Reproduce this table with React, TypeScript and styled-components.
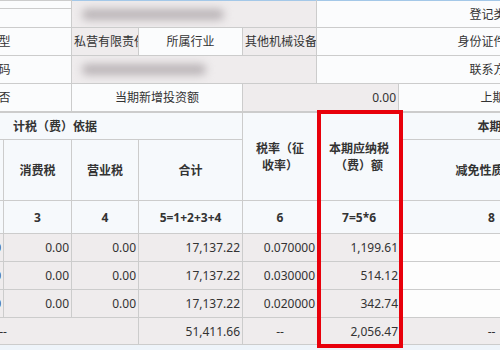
import React, { useLayoutEffect, useRef } from "react";
import styled, { createGlobalStyle, css } from "styled-components";

// the form is wider than the window; the screenshot shows it scrolled right
const SCROLL_LEFT = 233;

const GlobalStyle = createGlobalStyle`
  html, body {
    margin: 0;
    padding: 0;
    background: #eef4fa;
  }
  body {
    font-family: "Noto Sans", "Noto Sans CJK SC", sans-serif;
    font-size: 12px;
    color: #333333;
  }
`;

const Viewport = styled.div`
  width: 500px;
  height: 350px;
  overflow: hidden;
  background: #eef4fa;
`;

const Sheet = styled.div`
  position: relative;
  width: 903px;
`;

const Table = styled.table<{ $w: number }>`
  border-collapse: collapse;
  table-layout: fixed;
  width: ${({ $w }) => $w}px;
  border: none;
`;

const Col = styled.col<{ $w: number }>`
  width: ${({ $w }) => $w}px;
`;

const Row = styled.tr<{ $h: number }>`
  height: ${({ $h }) => $h}px;
`;

type Tone = "head" | "plain" | "field" | "blank";

const tones: Record<Tone, string> = {
  head: "#f6f9fc",
  plain: "#fbfcfd",
  field: "#efeced",
  blank: "#fdfdfd",
};

const Cell = styled.td<{
  $tone?: Tone;
  $align?: "left" | "center" | "right";
  $bold?: boolean;
  $wrap?: boolean;
  $topline?: boolean;
}>`
  border: 1px solid #cccccc;
  background: ${({ $tone = "plain" }) => tones[$tone]};
  text-align: ${({ $align = "center" }) => $align};
  font-weight: ${({ $bold }) => ($bold ? 700 : 400)};
  padding: ${({ $wrap }) => ($wrap ? "0 8px" : "0 2px")};
  white-space: ${({ $wrap }) => ($wrap ? "normal" : "nowrap")};
  overflow: hidden;
  line-height: 17px;
  vertical-align: middle;
  ${({ $topline }) =>
    $topline &&
    css`
      border-top: 1px solid #a4c8e8;
    `}
`;

// masked personal data: a smeared grey bar
const Smudge = styled.div<{ $w: number }>`
  width: ${({ $w }) => $w}px;
  height: 11px;
  margin-left: 8px;
  border-radius: 5px;
  background: #bab4b7;
  filter: blur(4px);
`;

const Highlight = styled.div`
  position: absolute;
  left: ${SCROLL_LEFT + 317}px;
  top: 110px;
  width: 86px;
  height: 238px;
  box-sizing: border-box;
  border: 4px solid #e8000b;
  pointer-events: none;
`;

const InfoTable = () => (
  <Table $w={903}>
    <colgroup>
      <Col $w={110} />
      <Col $w={194} />
      <Col $w={67} />
      <Col $w={104} />
      <Col $w={74} />
      <Col $w={82} />
      <Col $w={272} />
    </colgroup>
    <tbody>
      <Row $h={8}>
        <Cell rowSpan={6}>纳税人信息</Cell>
        <Cell />
        <Cell colSpan={3} rowSpan={2} $tone="field" $align="left" $topline>
          <Smudge $w={142} />
        </Cell>
        <Cell colSpan={2} rowSpan={2} $topline>
          登记类型
        </Cell>
      </Row>
      <Row $h={19}>
        <Cell />
      </Row>
      <Row $h={28}>
        <Cell>登记注册类型</Cell>
        <Cell $tone="field" $align="left">
          私营有限责任公司
        </Cell>
        <Cell>所属行业</Cell>
        <Cell $tone="field" $align="left">
          其他机械设备制造业
        </Cell>
        <Cell colSpan={2}>身份证件类型</Cell>
      </Row>
      <Row $h={28}>
        <Cell>社会信用代码</Cell>
        <Cell colSpan={3} $tone="field" $align="left">
          <Smudge $w={124} />
        </Cell>
        <Cell colSpan={2}>联系方式</Cell>
      </Row>
      <Row $h={28}>
        <Cell>适用：是／否</Cell>
        <Cell colSpan={2}>当期新增投资额</Cell>
        <Cell colSpan={2} $tone="field" $align="right">
          0.00
        </Cell>
        <Cell>上期留抵可抵免金额</Cell>
      </Row>
    </tbody>
  </Table>
);

interface TaxLine {
  name: string;
  vat: string;
  rate: string;
  due: string;
}

const lines: TaxLine[] = [
  { name: "城市维护建设税", vat: "17,137.22", rate: "0.070000", due: "1,199.61" },
  { name: "教育费附加", vat: "17,137.22", rate: "0.030000", due: "514.12" },
  { name: "地方教育附加", vat: "17,137.22", rate: "0.020000", due: "342.74" },
];

const TaxTable = () => (
  <Table $w={895}>
    <colgroup>
      <Col $w={100} />
      <Col $w={68} />
      <Col $w={68} />
      <Col $w={68} />
      <Col $w={67} />
      <Col $w={104} />
      <Col $w={75} />
      <Col $w={83} />
      <Col $w={182} />
      <Col $w={80} />
    </colgroup>
    <tbody>
      <Row $h={27}>
        <Cell rowSpan={3} $tone="head" $bold>
          税（费）种
        </Cell>
        <Cell colSpan={5} $tone="head" $bold>
          计税（费）依据
        </Cell>
        <Cell rowSpan={2} $tone="head" $bold $wrap>
          税率（征收率）
        </Cell>
        <Cell rowSpan={2} $tone="head" $bold $wrap>
          本期应纳税（费）额
        </Cell>
        <Cell colSpan={2} $tone="head" $bold>
          本期减免税（费）额
        </Cell>
      </Row>
      <Row $h={61}>
        <Cell $tone="head" $bold>
          增值税
        </Cell>
        <Cell $tone="head" $bold>
          免抵税额
        </Cell>
        <Cell $tone="head" $bold>
          消费税
        </Cell>
        <Cell $tone="head" $bold>
          营业税
        </Cell>
        <Cell $tone="head" $bold>
          合计
        </Cell>
        <Cell $tone="head" $bold>
          减免性质代码
        </Cell>
        <Cell $tone="head" $bold>
          减免税额
        </Cell>
      </Row>
      <Row $h={33}>
        {["1", "2", "3", "4", "5=1+2+3+4", "6", "7=5*6", "8", "9"].map((n) => (
          <Cell key={n} $tone="head" $bold>
            {n}
          </Cell>
        ))}
      </Row>
      {lines.map((l) => (
        <Row $h={28} key={l.name}>
          <Cell $tone="head">{l.name}</Cell>
          <Cell $tone="field" $align="right">
            {l.vat}
          </Cell>
          <Cell $tone="field" $align="right">
            0.00
          </Cell>
          <Cell $tone="field" $align="right">
            0.00
          </Cell>
          <Cell $tone="field" $align="right">
            0.00
          </Cell>
          <Cell $tone="field" $align="right">
            {l.vat}
          </Cell>
          <Cell $tone="field" $align="right">
            {l.rate}
          </Cell>
          <Cell $tone="field" $align="right">
            {l.due}
          </Cell>
          <Cell $tone="blank" />
          <Cell $tone="blank" />
        </Row>
      ))}
      <Row $h={27}>
        <Cell $tone="field">合计</Cell>
        <Cell colSpan={4} $tone="field">
          --
        </Cell>
        <Cell $tone="field" $align="right">
          51,411.66
        </Cell>
        <Cell $tone="field">--</Cell>
        <Cell $tone="field" $align="right">
          2,056.47
        </Cell>
        <Cell $tone="field">--</Cell>
        <Cell $tone="field" />
      </Row>
    </tbody>
  </Table>
);

export default function App(): JSX.Element {
  const viewRef = useRef<HTMLDivElement>(null);

  useLayoutEffect(() => {
    if (viewRef.current) viewRef.current.scrollLeft = SCROLL_LEFT;
  }, []);

  return (
    <>
      <GlobalStyle />
      <Viewport ref={viewRef}>
        <Sheet>
          <InfoTable />
          <TaxTable />
          <Highlight />
        </Sheet>
      </Viewport>
    </>
  );
}
